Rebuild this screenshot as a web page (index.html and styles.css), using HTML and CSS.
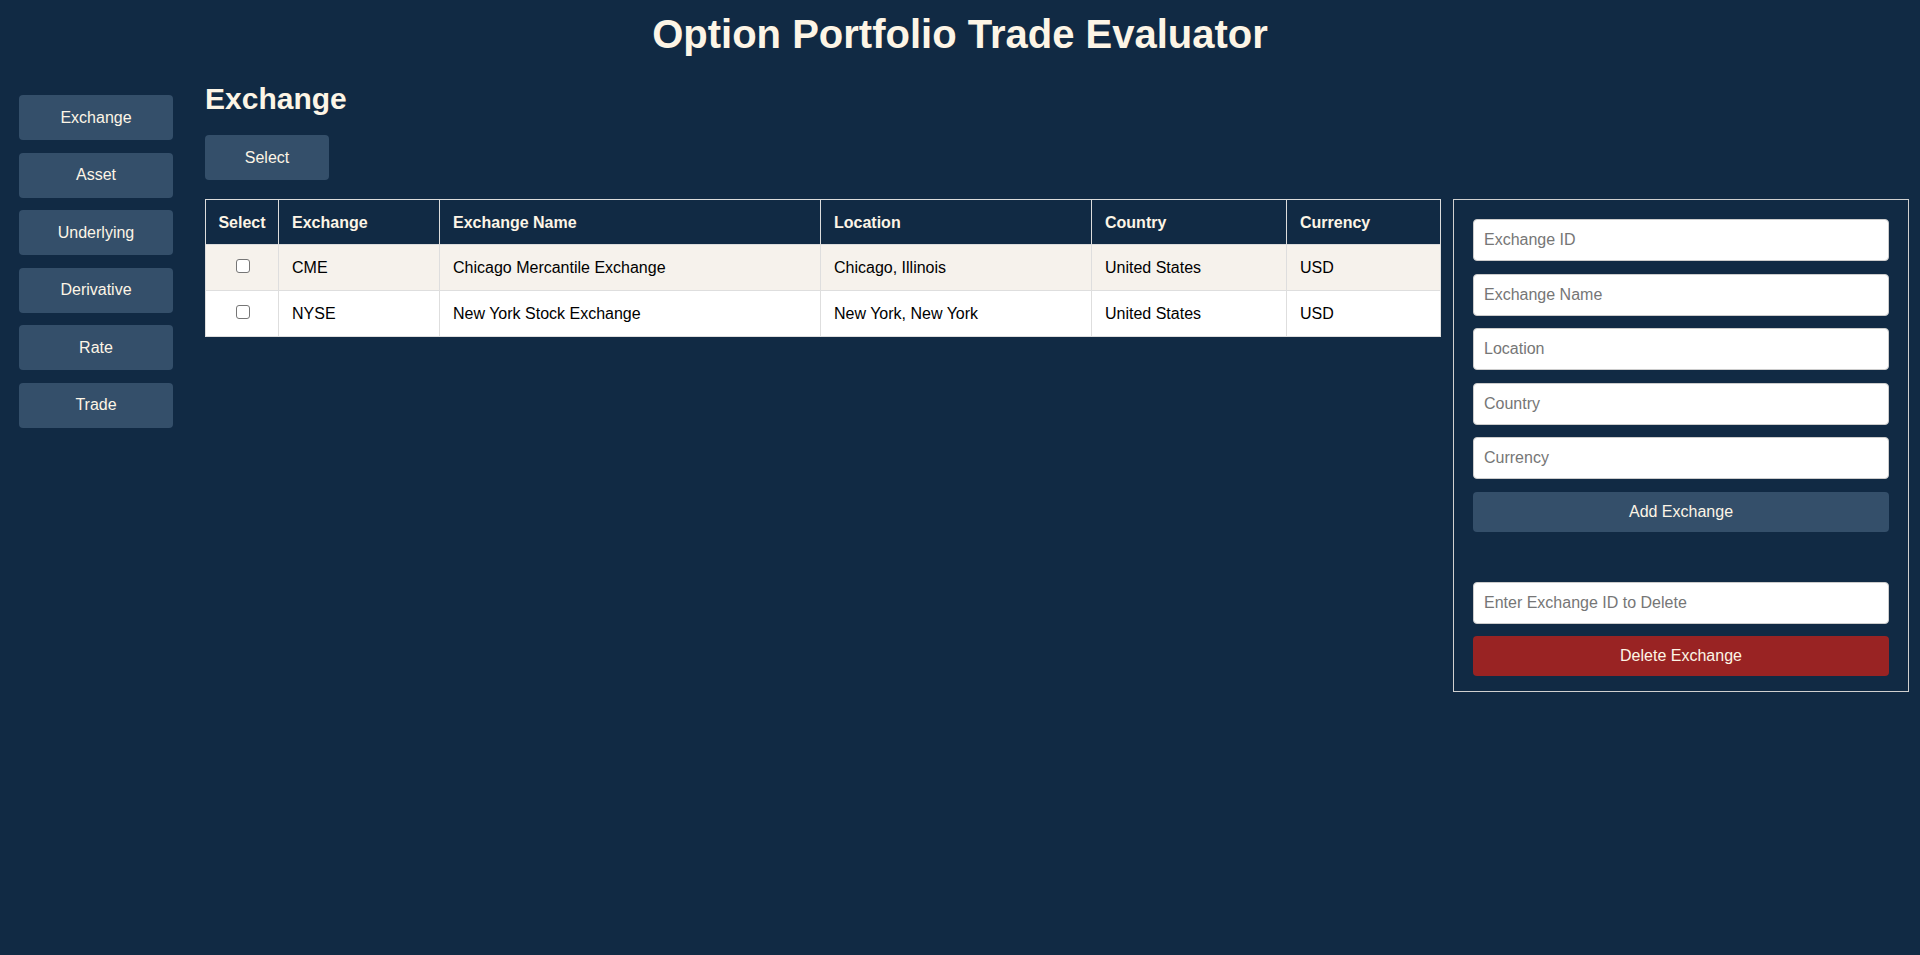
FILE: index.html
```html
<!DOCTYPE html>
<html lang="en">
<head>
<meta charset="utf-8">
<title>Option Portfolio Trade Evaluator</title>
<link rel="stylesheet" href="styles.css">
</head>
<body>
<header class="app-header">
  <h1 class="app-title">Option Portfolio Trade Evaluator</h1>
</header>
<div class="layout">
  <nav class="sidebar">
    <button class="nav-btn">Exchange</button>
    <button class="nav-btn">Asset</button>
    <button class="nav-btn">Underlying</button>
    <button class="nav-btn">Derivative</button>
    <button class="nav-btn">Rate</button>
    <button class="nav-btn">Trade</button>
  </nav>
  <main class="main">
    <h2 class="section-title">Exchange</h2>
    <button class="action-btn">Select</button>
    <div class="content">
      <table class="data-table">
        <colgroup>
          <col class="c-select"><col class="c-ex"><col class="c-name"><col class="c-loc"><col class="c-country"><col class="c-cur">
        </colgroup>
        <thead>
          <tr>
            <th class="center">Select</th>
            <th>Exchange</th>
            <th>Exchange Name</th>
            <th>Location</th>
            <th>Country</th>
            <th>Currency</th>
          </tr>
        </thead>
        <tbody>
          <tr>
            <td class="center"><input type="checkbox" class="row-check"></td>
            <td>CME</td>
            <td>Chicago Mercantile Exchange</td>
            <td>Chicago, Illinois</td>
            <td>United States</td>
            <td>USD</td>
          </tr>
          <tr>
            <td class="center"><input type="checkbox" class="row-check"></td>
            <td>NYSE</td>
            <td>New York Stock Exchange</td>
            <td>New York, New York</td>
            <td>United States</td>
            <td>USD</td>
          </tr>
        </tbody>
      </table>
      <aside class="form-panel">
        <input class="field" type="text" placeholder="Exchange ID">
        <input class="field" type="text" placeholder="Exchange Name">
        <input class="field" type="text" placeholder="Location">
        <input class="field" type="text" placeholder="Country">
        <input class="field" type="text" placeholder="Currency">
        <button class="panel-btn">Add Exchange</button>
        <input class="field field-delete" type="text" placeholder="Enter Exchange ID to Delete">
        <button class="panel-btn danger">Delete Exchange</button>
      </aside>
    </div>
  </main>
</div>
</body>
</html>
```

FILE: styles.css
```css
* { box-sizing: border-box; }

html, body {
  margin: 0;
  padding: 0;
  background: #112a44;
  height: 100%;
}

body {
  font-family: "Liberation Sans", Arial, sans-serif;
  color: #fdf5e6;
  font-size: 16px;
}

.app-header {
  padding-top: 11px;
  text-align: center;
}

.app-title {
  margin: 0;
  font-size: 40px;
  line-height: 46px;
  font-weight: bold;
  color: #fdf5e6;
}

.layout {
  display: flex;
  align-items: flex-start;
}

.sidebar {
  display: flex;
  flex-direction: column;
  gap: 12.6px;
  padding: 38px 0 0 19px;
  width: 173px;
  flex-shrink: 0;
}

.nav-btn {
  width: 154px;
  height: 45px;
  background: #344f6a;
  color: #fdf5e6;
  border: none;
  border-radius: 4px;
  font-family: "Liberation Sans", Arial, sans-serif;
  font-size: 16px;
  padding: 0;
}

.main {
  flex: 1;
  margin-left: 32px;
  padding: 25px 12px 0 0;
  min-width: 0;
}

.section-title {
  margin: 0 0 19px;
  font-size: 30px;
  line-height: 34px;
  font-weight: bold;
  color: #fdf5e6;
}

.action-btn {
  display: block;
  width: 124px;
  height: 45px;
  background: #344f6a;
  color: #fdf5e6;
  border: none;
  border-radius: 4px;
  font-family: "Liberation Sans", Arial, sans-serif;
  font-size: 16px;
  margin-bottom: 19px;
}

.content {
  display: flex;
  align-items: flex-start;
  gap: 12px;
}

.data-table {
  flex: 1;
  border-collapse: collapse;
  table-layout: fixed;
  width: 1235px;
  border: 1px solid #dcdcdc;
}

.c-select { width: 73px; }
.c-ex { width: 161px; }
.c-name { width: 381px; }
.c-loc { width: 271px; }
.c-country { width: 195px; }
.c-cur { width: 154px; }

.data-table th {
  height: 45px;
  padding: 1px 13px 0;
  text-align: left;
  font-weight: bold;
  color: #fdf5e6;
  background: #112a44;
  border: 1px solid #dcdcdc;
  white-space: nowrap;
}

.data-table td {
  height: 46px;
  padding: 0 13px;
  color: #000;
  background: #ffffff;
  border: 1px solid #dedede;
  white-space: nowrap;
}

.data-table tbody tr:nth-child(odd) td {
  background: #f6f2ec;
}

.data-table th.center { text-align: center; padding: 1px 12px 0; }
.data-table td.center { text-align: center; padding: 0 12px; }

.row-check {
  appearance: none;
  -webkit-appearance: none;
  display: inline-block;
  margin: 0 0 0 1px;
  width: 14px;
  height: 14px;
  border: 1px solid #767676;
  border-radius: 3px;
  background: #ffffff;
  vertical-align: middle;
  position: relative;
  top: -2px;
}

.form-panel {
  width: 456px;
  flex-shrink: 0;
  border: 1px solid #d0d0d0;
  padding: 19px 19px 15px;
  display: flex;
  flex-direction: column;
  gap: 12.5px;
}

.field {
  width: 100%;
  height: 42px;
  padding: 0 10px;
  border: 1px solid #cccccc;
  border-radius: 4px;
  background: #ffffff;
  font-family: "Liberation Sans", Arial, sans-serif;
  font-size: 16px;
  color: #000;
}

.field::placeholder { color: #767676; }

.field-delete { margin-top: 37.5px; }

.panel-btn {
  width: 100%;
  height: 40px;
  border: none;
  border-radius: 4px;
  background: #344f6a;
  color: #fdf5e6;
  font-family: "Liberation Sans", Arial, sans-serif;
  font-size: 16px;
}

.panel-btn.danger {
  background: #992323;
}
```
